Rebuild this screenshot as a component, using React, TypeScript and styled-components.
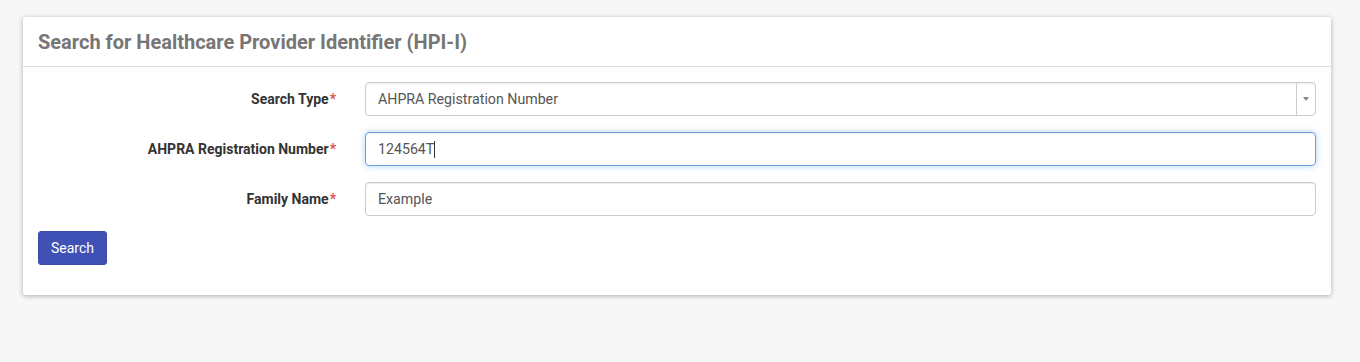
import styled, {createGlobalStyle} from "styled-components";

const GlobalStyle = createGlobalStyle`
    html, body {
        margin: 0;
        padding: 0;
        background-color: #f7f7f7;
        font-family: Roboto, "Noto Sans", sans-serif;
    }
`;

type FieldRow = {
    label: string;
    value: string;
    kind: "select" | "focused" | "plain";
};

const rows: FieldRow[] = [
    {label: "Search Type", value: "AHPRA Registration Number", kind: "select"},
    {label: "AHPRA Registration Number", value: "124564T", kind: "focused"},
    {label: "Family Name", value: "Example", kind: "plain"},
];

export default function App() {
    return (
        <Page>
            <GlobalStyle/>
            <Card>
                <CardHeader>
                    <Title>Search for Healthcare Provider Identifier (HPI-I)</Title>
                </CardHeader>
                <CardBody>
                    <FormGrid>
                        {rows.map(row => (
                            <Row key={row.label}>
                                <Label>
                                    {row.label}<Required>*</Required>
                                </Label>
                                <Field $focused={row.kind === "focused"}>
                                    <FieldText>
                                        {row.value}
                                        {row.kind === "focused" && <Caret/>}
                                    </FieldText>
                                    {row.kind === "select" && (
                                        <ArrowBox>
                                            <Arrow/>
                                        </ArrowBox>
                                    )}
                                </Field>
                            </Row>
                        ))}
                    </FormGrid>
                    <Button>Search</Button>
                </CardBody>
            </Card>
        </Page>
    )
}

const Page = styled.div`
    padding: 17px 29px 67px 23px;
`;

const Card = styled.div`
    background-color: white;
    border-radius: 2px;
    box-shadow: 0 1px 5px rgba(0, 0, 0, 0.3);
`;

const CardHeader = styled.div`
    height: 49px;
    display: flex;
    align-items: center;
    padding: 0 15px;
    border-bottom: 1px solid #dddddd;
`;

const Title = styled.h3`
    margin: 0;
    font-size: 20px;
    font-weight: 700;
    color: #767676;
`;

const CardBody = styled.div`
    padding: 15px 15px 30px 15px;
`;

const FormGrid = styled.div`
    display: flex;
    flex-direction: column;
    gap: 16px;
`;

const Row = styled.div`
    display: grid;
    grid-template-columns: 298px 1fr;
    column-gap: 29px;
    align-items: center;
`;

const Label = styled.label`
    text-align: right;
    font-size: 14px;
    font-weight: 700;
    color: #333333;
`;

const Required = styled.span`
    color: #d9534f;
    margin-left: 1px;
`;

const Field = styled.div<{ $focused: boolean }>`
    height: 34px;
    box-sizing: border-box;
    display: flex;
    align-items: center;
    border: 1px solid ${p => p.$focused ? "#66a3e0" : "#cccccc"};
    border-radius: 4px;
    box-shadow: ${p => p.$focused ? "inset 0 1px 1px rgba(0,0,0,.075), 0 0 6px rgba(102, 163, 224, 0.5)" : "inset 0 1px 1px rgba(0,0,0,.075)"};
    font-size: 14.2px;
    color: #555555;
`;

const FieldText = styled.div`
    flex: 1;
    padding: 0 12px;
    display: flex;
    align-items: center;
`;

const Caret = styled.span`
    display: inline-block;
    width: 1px;
    height: 17px;
    background-color: #333333;
`;

const ArrowBox = styled.div`
    width: 18px;
    align-self: stretch;
    border-left: 1px solid #cccccc;
    display: flex;
    align-items: center;
    justify-content: center;
`;

const Arrow = styled.span`
    width: 0;
    height: 0;
    border-left: 3px solid transparent;
    border-right: 3px solid transparent;
    border-top: 4px solid #888888;
`;

const Button = styled.button`
    margin-top: 15px;
    height: 34px;
    padding: 0 12px;
    background-color: #3f51b5;
    color: white;
    border: 1px solid #3a4aa8;
    border-radius: 3px;
    font-family: Roboto, "Noto Sans", sans-serif;
    font-size: 14px;
    cursor: pointer;
`;
